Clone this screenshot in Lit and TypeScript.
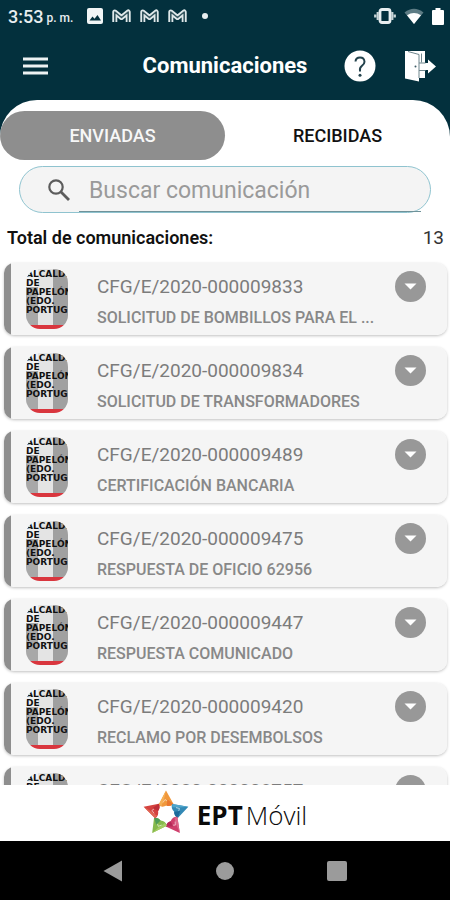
import { LitElement, html, css, svg } from "lit";
import { customElement, property, state } from "lit/decorators.js";
import { classMap } from "lit/directives/class-map.js";

interface Message {
  code: string;
  subject: string;
}

const SENT: Message[] = [
  { code: "CFG/E/2020-000009833", subject: "SOLICITUD DE BOMBILLOS PARA EL ..." },
  { code: "CFG/E/2020-000009834", subject: "SOLICITUD DE TRANSFORMADORES" },
  { code: "CFG/E/2020-000009489", subject: "CERTIFICACIÓN BANCARIA" },
  { code: "CFG/E/2020-000009475", subject: "RESPUESTA DE OFICIO 62956" },
  { code: "CFG/E/2020-000009447", subject: "RESPUESTA COMUNICADO" },
  { code: "CFG/E/2020-000009420", subject: "RECLAMO POR DESEMBOLSOS" },
  { code: "CFG/E/2020-000008757", subject: "" },
];

@customElement("status-bar")
class StatusBar extends LitElement {
  static styles = css`
    :host {
      display: flex;
      align-items: center;
      height: 32px;
      padding: 0 6px 0 8px;
      color: #e8eef0;
    }
    .time {
      font-size: 18px;
      font-weight: 500;
    }
    .period {
      font-size: 12px;
      font-weight: 500;
      margin: 4px 14px 0 3px;
    }
    .left,
    .right {
      display: flex;
      align-items: center;
    }
    .left {
      flex: 1;
      gap: 9px;
    }
    .right {
      gap: 8px;
    }
    .dot {
      width: 6px;
      height: 6px;
      margin-left: 6px;
      border-radius: 50%;
      background: #e8eef0;
    }
  `;
  render() {
    const mail = html`<svg width="19" height="15" viewBox="0 0 19 15" stroke-linejoin="round" fill="none">
      <path d="M2.800 13V3L9.500 8.500 16.200 3V13" stroke="#dfe8ea" stroke-width="5" />
      <path d="M2.800 13V3L9.500 8.500 16.200 3V13" stroke="#35565f" stroke-width="1.600" />
    </svg>`;
    return html`
      <span class="time">3:53</span><span class="period">p. m.</span>
      <div class="left">
        <svg width="16" height="16" viewBox="0 0 16 16">
          <rect width="16" height="16" rx="2" fill="#f1f5f6" />
          <path d="M2.500 12.500 5.500 8.500l2 2.300 3-3.800 3.500 5.500Z" fill="#03303d" />
        </svg>
        ${mail}${mail}${mail}
        <span class="dot"></span>
      </div>
      <div class="right">
        <svg width="22" height="16" viewBox="0 0 22 16">
          <rect x="6" y="1.500" width="10" height="13" rx="2" fill="none" stroke="#e8eef0" stroke-width="2.800" />
          <path d="M3.700 4v8M18.300 4v8M1.200 6.500v3M20.800 6.500v3" stroke="#c9d5d8" stroke-width="2.200" />
        </svg>
        <svg width="20" height="16" viewBox="0 0 20 16">
          <path d="M0.500 4.500Q10-3 19.500 4.500L10 16Z" fill="#5d7c85" />
          <path d="M3 7.300Q10 2.500 17 7.300L10 16Z" fill="#fff" />
        </svg>
        <svg width="12" height="17" viewBox="0 0 12 17">
          <path d="M3.500 0h5v2H11q1 0 1 1v13q0 1-1 1H1q-1 0-1-1V3q0-1 1-1h2.500Z" fill="#fff" />
        </svg>
      </div>
    `;
  }
}

@customElement("app-bar")
class AppBar extends LitElement {
  static styles = css`
    :host {
      display: grid;
      grid-template-columns: 1fr auto 1fr;
      align-items: center;
      height: 68px;
      padding: 0 14px 0 22px;
      color: #fff;
    }
    h1 {
      margin: 0 8px 0 0;
      font-size: 22px;
      line-height: 28px;
      font-weight: 700;
    }
    .actions {
      display: flex;
      justify-content: flex-end;
      gap: 28px;
    }
    button {
      display: block;
      justify-self: start;
      border: 0;
      padding: 0;
      background: none;
    }
    svg {
      display: block;
    }
  `;
  render() {
    return html`
      <button aria-label="Menú">
        <svg width="26" height="20" viewBox="0 0 26 20">
          <path d="M1 3h25M1 10h25M1 17h25" stroke="#edf2f3" stroke-width="2.800" />
        </svg>
      </button>
      <h1>Comunicaciones</h1>
      <div class="actions">
        <button aria-label="Ayuda">
          <svg width="32" height="32" viewBox="0 0 32 32">
            <circle cx="16" cy="16" r="15.500" fill="#fff" />
            <path d="M11.500 11.500Q11.800 7.500 16 7.500T20.500 11.700Q20.500 13.800 18 15.800T16 20.500V21.500" fill="none" stroke="#23424c" stroke-width="2" />
            <circle cx="16" cy="25.200" r="1.500" fill="#23424c" />
          </svg>
        </button>
        <button aria-label="Salir">
          <svg width="32" height="32" viewBox="0 0 32 32">
            <path d="M1 1H21V13H24V9.500L32 16.500 24 23.500V20H21V28H15V31.500L1 28.500V1Z" fill="#fff" />
            <path d="M4 1.500 15 4.500V28M17.500 3.500V12.500M15 13h6.500M15 20.500h6.500" fill="none" stroke="#6f868d" stroke-width="1" />
            <circle cx="11.500" cy="16.500" r="1" fill="#3c5a64" />
          </svg>
        </button>
      </div>
    `;
  }
}

@customElement("message-card")
class MessageCard extends LitElement {
  @property({ attribute: false }) message!: Message;

  static styles = css`
    :host {
      display: flex;
      height: 72px;
      box-sizing: border-box;
      flex-shrink: 0;
      padding: 6px 21px 6px 22px;
      border-radius: 10px;
      background: linear-gradient(90deg, #8e8e8e 7px, #f5f5f5 7px);
      box-shadow: 0 1px 3px #00000040;
    }
    .seal {
      width: 42px;
      height: 60px;
      box-sizing: border-box;
      padding-top: 1px;
      flex-shrink: 0;
      overflow: hidden;
      border-radius: 14px;
      background:
        linear-gradient(#d9363e, #d9363e) 0 100% / 100% 4px no-repeat,
        linear-gradient(#f2f2f2, #f2f2f2) 0 0 / 12px 18px no-repeat,
        linear-gradient(90deg, #a8a8a8 12px, #e4e4e4 12px 27px, #a0a0a0 27px);
      color: #111;
      font: 700 9px/9px "DejaVu Sans", sans-serif;
    }
    .text {
      flex: 1;
      min-width: 0;
      padding: 6px 0 0 29px;
      color: #7c7c7c;
    }
    h2,
    p {
      margin: 0;
      overflow: hidden;
      white-space: nowrap;
      text-overflow: ellipsis;
    }
    h2 {
      font-size: 19px;
      line-height: 24px;
      font-weight: 400;
    }
    p {
      margin-top: 7px;
      font-size: 16px;
      line-height: 24px;
      font-weight: 500;
      color: #888;
    }
    button {
      width: 31px;
      height: 31px;
      flex-shrink: 0;
      margin: 2px 0 0 18px;
      padding: 0;
      border: 0;
      border-radius: 50%;
      background: #989898;
    }
    svg {
      display: block;
      margin: auto;
    }
  `;
  render() {
    return html`
      <div class="seal">ALCALDÍA<br />DE<br />PAPELÓN<br />(EDO.<br />PORTUG</div>
      <div class="text">
        <h2>${this.message.code}</h2>
        <p>${this.message.subject}</p>
      </div>
      <button aria-label="Mostrar detalle">
        <svg width="13" height="7" viewBox="0 0 13 7"><path d="M0.500 0.500h12L6.500 6.500Z" fill="#fff" /></svg>
      </button>
    `;
  }
}

@customElement("brand-footer")
class BrandFooter extends LitElement {
  static styles = css`
    :host {
      display: flex;
      flex-shrink: 0;
      align-items: center;
      justify-content: center;
      gap: 8px;
      height: 56px;
      background: #fff;
      color: #0a0a0a;
      font-family: "Open Sans", sans-serif;
      font-size: 26px;
    }
    .name {
      padding-top: 4px;
    }
    b {
      font-weight: 700;
    }
    .light {
      font-weight: 300;
      margin-left: 3px;
    }
  `;
  render() {
    const petals = [
      ["#f0983c", "#f5b055", "#e9782f"],
      ["#3389b5", "#4fa5cb", "#1d6a9b"],
      ["#cf3f6c", "#dc668a", "#b52a58"],
      ["#86b94b", "#a5cc62", "#4f9c58"],
      ["#d4423f", "#e06654", "#bd2f38"],
    ];
    return html`
      <svg width="46" height="46" viewBox="0 0 46 46">
        ${petals.map(
          ([base, light, dark], i) => svg`
          <g transform="rotate(${i * 72} 23 24)">
            <path d="M23 0.500 30.500 14Q27 17 23.500 15.500 19 18 15.500 15Z" fill=${base} />
            <path d="M23 0.500 21 9 18.500 16 15.500 15Z" fill=${light} />
            <path d="M24.500 9.500 30.500 14Q27 17 23.500 15.500Z" fill=${dark} />
            <path d="M20 12.500 22 9.500 24 11" fill="none" stroke="#fff" stroke-width="0.900" opacity="0.600" />
          </g>`,
        )}
      </svg>
      <span class="name"><b>EPT</b><span class="light">Móvil</span></span>
    `;
  }
}

@customElement("system-nav")
class SystemNav extends LitElement {
  static styles = css`
    :host {
      display: grid;
      grid-template-columns: repeat(3, 112px);
      flex-shrink: 0;
      justify-content: center;
      align-items: center;
      height: 59px;
      background: #000;
    }
    button {
      display: flex;
      justify-content: center;
      padding: 0;
      border: 0;
      background: none;
    }
  `;
  render() {
    return html`
      <button aria-label="Atrás">
        <svg width="20" height="22" viewBox="0 0 20 22"><path d="M19 0.500V21.500L0.500 11Z" fill="#9b9b9b" /></svg>
      </button>
      <button aria-label="Inicio">
        <svg width="20" height="20" viewBox="0 0 20 20"><circle cx="10" cy="10" r="9" fill="#9b9b9b" /></svg>
      </button>
      <button aria-label="Recientes">
        <svg width="20" height="20" viewBox="0 0 20 20"><rect width="20" height="20" rx="2" fill="#9b9b9b" /></svg>
      </button>
    `;
  }
}

@customElement("app-root")
class AppRoot extends LitElement {
  @state() private tab = "ENVIADAS";

  static styles = css`
    :host {
      display: flex;
      flex-direction: column;
      height: 100vh;
      background: #03303d;
      font-family: Roboto, sans-serif;
    }
    main {
      display: flex;
      flex: 1;
      flex-direction: column;
      min-height: 0;
      overflow: hidden;
      border-radius: 37px 37px 0 0;
      background: #fff;
    }
    .tabs {
      display: grid;
      grid-template-columns: 1fr 1fr;
      flex-shrink: 0;
      margin-top: 11px;
    }
    .tab {
      height: 49px;
      padding: 0;
      border: 0;
      border-radius: 25px;
      background: none;
      color: #111;
      font: 500 18px/24px Roboto, sans-serif;
    }
    .selected {
      background: #8e8e8e;
      color: #f7f7f7;
    }
    .search {
      display: flex;
      flex-shrink: 0;
      align-items: center;
      height: 47px;
      box-sizing: border-box;
      margin: 6px 19px 0;
      padding: 0 9px 0 26px;
      border: 1px solid #8fc3cf;
      border-radius: 24px;
      background: #f4f4f4;
    }
    .search svg {
      flex-shrink: 0;
    }
    input {
      flex: 1;
      align-self: stretch;
      min-width: 0;
      margin-left: 7px;
      padding: 4px 10px 0;
      border: 0;
      border-bottom: 1px solid #6f9299;
      outline: 0;
      background: none;
      font: 400 23px/28px Roboto, sans-serif;
    }
    input::placeholder {
      color: #9a9a9a;
      opacity: 1;
    }
    .total {
      display: flex;
      flex-shrink: 0;
      justify-content: space-between;
      margin: 13px 6px 0 7px;
      color: #111;
      font-size: 18px;
      line-height: 24px;
    }
    .total b {
      font-weight: 600;
    }
    .count {
      font-size: 19px;
      color: #333;
    }
    .list {
      display: flex;
      flex: 1;
      flex-direction: column;
      gap: 12px;
      min-height: 0;
      overflow: hidden;
      padding: 13px 3px 0 4px;
    }
  `;
  render() {
    return html`
      <status-bar></status-bar>
      <app-bar></app-bar>
      <main>
        <div class="tabs" role="tablist">
          ${["ENVIADAS", "RECIBIDAS"].map(
            (name) => html`<button
              role="tab"
              aria-selected=${this.tab === name}
              class=${classMap({ tab: true, selected: this.tab === name })}
              @click=${() => (this.tab = name)}
            >${name}</button>`,
          )}
        </div>
        <label class="search">
          <svg width="26" height="26" viewBox="0 0 26 26" fill="none" stroke="#5c5c5c">
            <circle cx="10" cy="10" r="6.700" stroke-width="2.200" />
            <path d="M14.800 14.800 23 23" stroke-width="2.800" />
          </svg>
          <input type="text" aria-label="Buscar comunicación" placeholder="Buscar comunicación" />
        </label>
        <div class="total"><b>Total de comunicaciones:</b><span class="count">13</span></div>
        <div class="list">${SENT.map((m) => html`<message-card .message=${m}></message-card>`)}</div>
      </main>
      <brand-footer></brand-footer>
      <system-nav></system-nav>
    `;
  }
}
